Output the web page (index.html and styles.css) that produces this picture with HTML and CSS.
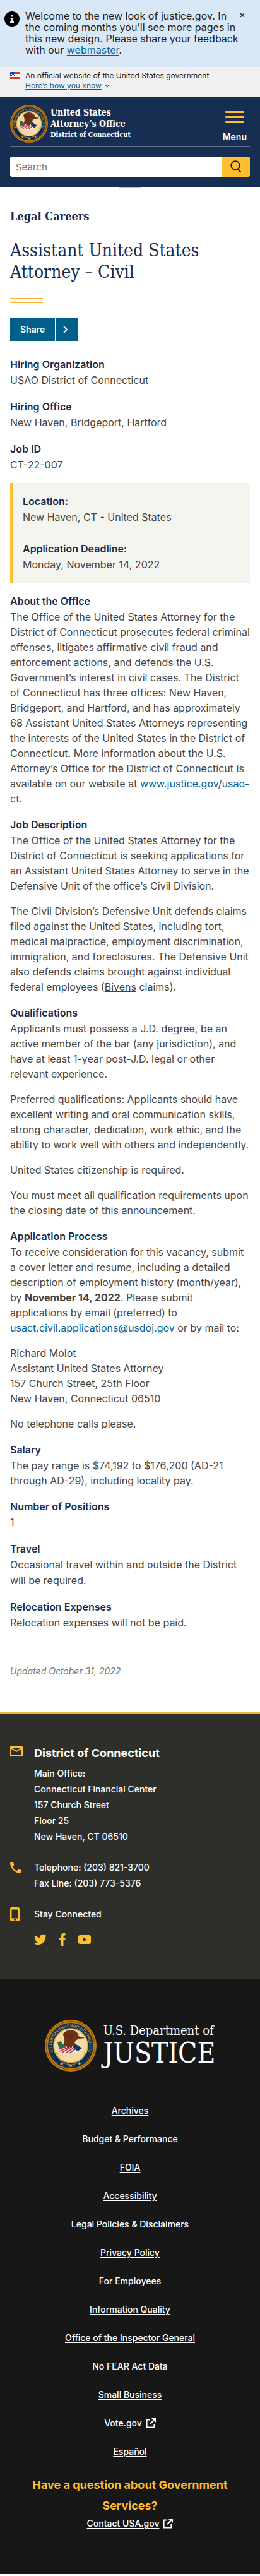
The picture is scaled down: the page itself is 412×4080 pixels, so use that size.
FILE: index.html
```html
<!DOCTYPE html>
<html lang="en">
<head>
<meta charset="utf-8">
<meta name="viewport" content="width=device-width, initial-scale=1">
<title>Assistant United States Attorney – Civil</title>
<link rel="stylesheet" href="styles.css">
</head>
<body>
<svg class="defs" aria-hidden="true">
  <symbol id="seal" viewBox="0 0 82 82">
    <circle cx="41" cy="41" r="41" fill="#c47a08"/>
    <circle cx="41" cy="41" r="38.500" fill="none" stroke="#6b4410" stroke-width="1"/>
    <circle cx="41" cy="41" r="36" fill="#14324c"/>
    <circle cx="41" cy="41" r="31.500" fill="none" stroke="#a98c50" stroke-width="4.500" stroke-dasharray="1.300 1.500 0.800 1.200" pathLength="190"/>
    <path d="M9 52a34 34 0 0 0 64 0l-5-2a29 29 0 0 1-54 0z" fill="#0c2950"/>
    <circle cx="41" cy="41" r="27" fill="#f3d9a2" stroke="#d9a63c" stroke-width="1.500"/>
    <path d="M19 49a22 22 0 0 0 44 0" fill="none" stroke="#b99c6c" stroke-width="2" stroke-dasharray="1 1"/>
    <path d="M20 36l5-2 4 5 5-1-3 8-8 1z" fill="#2e6b4c"/>
    <path d="M22 47l12-5 14 1 10 3-9 6-14 3-11-4z" fill="#f6efe9"/>
    <path d="M22 47l11-4M23 50l14-6M27 52l14-8M33 53l12-8M39 53l10-7" stroke="#b8283b" stroke-width="1.600"/>
    <path d="M46 36l5 4 8 5-7 5-7-6z" fill="#18356b"/>
    <path d="M29 22c5-6 12-7 19-4l6 5 9 6-8 1-5 2-3 4 1 4-4 1-2 4-3-2-3 3-2-5-4-1 1-6c1-4-2-8-2-12z" fill="#6d3218"/>
    <path d="M31 22c6 0 9 2 14 6M31 25c5 1 7 3 11 6" stroke="#3f1b0d" fill="none"/>
    <path d="M52 23l6 1 3 4-6-1z" fill="#eee0c0"/>
    <path d="M27 67l1 2 2 0-2 1 1 2-2-1-2 1 1-2-2-1 2 0zM41 70l1 2 2 0-2 1 1 2-2-1-2 1 1-2-2-1 2 0zM55 67l1 2 2 0-2 1 1 2-2-1-2 1 1-2-2-1 2 0z" fill="#e2b13c"/>
  </symbol>
  <symbol id="external" viewBox="0 0 16 16">
    <path d="M7 2.500H1.500v12h12V9M9.500 1H15v5.500M14.500 1.500L7 9" fill="none" stroke="currentColor" stroke-width="2.200"/>
  </symbol>
</svg>

<section class="alert" aria-label="Site notice">
  <svg class="alert-icon" viewBox="0 0 24 24" aria-hidden="true"><circle cx="12" cy="12" r="12" fill="#000"/><path d="M10.500 5.500h3v3h-3zM9.500 10h4v6h1.500v2h-6v-2h1.500v-4h-1z" fill="#d9e8f6"/></svg>
  <p class="alert-text">Welcome to the new look of justice.gov. In the coming months you’ll see more pages in this new design. Please share your feedback with our <a href="#">webmaster</a>.</p>
  <button class="alert-close" type="button" aria-label="Close"><svg viewBox="0 0 8 8" aria-hidden="true"><path d="M1.200 1.200l5.600 5.600M6.800 1.200L1.200 6.800" stroke="#1b1b1b" stroke-width="1.500"/></svg></button>
</section>

<section class="gov" aria-label="Official government website">
  <svg class="flag" viewBox="0 0 16 11" aria-hidden="true"><path fill="#fff" d="M0 0h16v11H0z"/><path d="M0 .5h16M0 2.500h16M0 4.500h16M0 6.500h16M0 8.500h16M0 10.500h16" stroke="#db3e1f"/><path fill="#2a3bb8" d="M0 0h8v7H0z"/><path d="M1 1.500h7M2 3.500h6M1 5.500h7" stroke="#fff" stroke-dasharray="1 1"/></svg>
  <div>
    <p>An official website of the United States government</p>
    <button class="gov-toggle" type="button"><span>Here’s how you know</span><svg viewBox="0 0 8 6" aria-hidden="true"><path d="M.7 1.200L4 4.500l3.300-3.300" fill="none" stroke="#005ea2" stroke-width="1.300"/></svg></button>
  </div>
</section>

<header class="header">
  <div class="brand-row">
    <a class="brand" href="#">
      <svg class="brand-seal" aria-hidden="true"><use href="#seal"/></svg>
      <span class="brand-text">United States<br>Attorney’s Office<small>District of Connecticut</small></span>
    </a>
    <button class="menu" type="button"><span class="bars"><i></i><i></i><i></i></span>Menu</button>
  </div>
  <form class="search">
    <input type="search" placeholder="Search" aria-label="Search">
    <button type="submit" aria-label="Search"><svg viewBox="0 0 18 20" aria-hidden="true"><circle cx="8" cy="8" r="6.800" fill="none" stroke="#1b1b1b" stroke-width="1.800"/><path d="M12 13.500l4.500 5.500" stroke="#1b1b1b" stroke-width="2.200"/></svg></button>
  </form>
</header>
<div class="notch"></div>

<main class="main">
  <p class="kicker">Legal Careers</p>
  <h1>Assistant United States Attorney – Civil</h1>
  <div class="rule"></div>
  <button class="share" type="button"><span>Share</span><svg viewBox="0 0 36 36" aria-hidden="true"><path d="M13 13l5 5-5 5" fill="none" stroke="#fff" stroke-width="1.800"/></svg></button>

  <section class="field"><h2>Hiring Organization</h2><p>USAO District of Connecticut</p></section>
  <section class="field"><h2>Hiring Office</h2><p>New Haven, Bridgeport, Hartford</p></section>
  <section class="field"><h2>Job ID</h2><p>CT-22-007</p></section>

  <aside class="box">
    <section><h2>Location:</h2><p>New Haven, CT - United States</p></section>
    <section><h2>Application Deadline:</h2><p>Monday, November 14, 2022</p></section>
  </aside>

  <section class="copy">
    <h2>About the Office</h2>
    <p>The Office of the United States Attorney for the District of Connecticut prosecutes federal criminal offenses, litigates affirmative civil fraud and enforcement actions, and defends the U.S. Government’s interest in civil cases. The District of Connecticut has three offices: New Haven, Bridgeport, and Hartford, and has approximately 68 Assistant United States Attorneys representing the interests of the United States in the District of Connecticut. More information about the U.S. Attorney’s Office for the District of Connecticut is available on our website at <a href="#">www.justice.gov/usao-ct</a>.</p>
  </section>
  <section class="copy">
    <h2>Job Description</h2>
    <p>The Office of the United States Attorney for the District of Connecticut is seeking applications for an Assistant United States Attorney to serve in the Defensive Unit of the office’s Civil Division.</p>
    <p>The Civil Division’s Defensive Unit defends claims filed against the United States, including tort, medical malpractice, employment discrimination, immigration, and foreclosures. The Defensive Unit also defends claims brought against individual federal employees (<u>Bivens</u> claims).</p>
  </section>
  <section class="copy">
    <h2>Qualifications</h2>
    <p>Applicants must possess a J.D. degree, be an active member of the bar (any jurisdiction), and have at least 1-year post-J.D. legal or other relevant experience.</p>
    <p>Preferred qualifications: Applicants should have excellent writing and oral communication skills, strong character, dedication, work ethic, and the ability to work well with others and independently.</p>
    <p>United States citizenship is required.</p>
    <p>You must meet all qualification requirements upon the closing date of this announcement.</p>
  </section>
  <section class="copy">
    <h2>Application Process</h2>
    <p>To receive consideration for this vacancy, submit a cover letter and resume, including a detailed description of employment history (month/year), by <strong>November 14, 2022</strong>. Please submit applications by email (preferred) to <a href="#">usact.civil.applications@usdoj.gov</a> or by mail to:</p>
    <p>Richard Molot<br>Assistant United States Attorney<br>157 Church Street, 25th Floor<br>New Haven, Connecticut 06510</p>
    <p>No telephone calls please.</p>
  </section>
  <section class="copy">
    <h2>Salary</h2>
    <p>The pay range is $74,192 to $176,200 (AD-21 through AD-29), including locality pay.</p>
  </section>
  <section class="field"><h2>Number of Positions</h2><p>1</p></section>
  <section class="field"><h2>Travel</h2><p>Occasional travel within and outside the District will be required.</p></section>
  <section class="field"><h2>Relocation Expenses</h2><p>Relocation expenses will not be paid.</p></section>
  <p class="updated">Updated October 31, 2022</p>
</main>

<footer>
  <div class="office">
    <svg class="office-icon" viewBox="0 0 24 24" aria-hidden="true"><path d="M3 5h18v14H3zM3 6l9 6 9-6" transform="translate(-2 0)" fill="none" stroke="currentColor" stroke-width="2" stroke-linejoin="round"/></svg>
    <div>
      <h2>District of Connecticut</h2>
      <p>Main Office:<br>Connecticut Financial Center<br>157 Church Street<br>Floor 25<br>New Haven, CT 06510</p>
    </div>
    <svg class="office-icon" viewBox="0 0 24 24" aria-hidden="true"><path d="M4.600 8.800a15 15 0 0 0 6.600 6.600l2.200-2.200c.3-.3.700-.4 1-.2 1.100.4 2.300.6 3.600.6.600 0 1 .4 1 1V18c0 .6-.4 1-1 1C8.600 19 1 11.400 1 2c0-.6.400-1 1-1h3.500c.6 0 1 .4 1 1 0 1.200.2 2.400.6 3.600.1.300 0 .7-.2 1z" transform="translate(-1 3)" fill="currentColor"/></svg>
    <p>Telephone: (203) 821-3700<br>Fax Line: (203) 773-5376</p>
    <svg class="office-icon" viewBox="0 0 24 24" aria-hidden="true"><path fill-rule="evenodd" d="M2.500 0h10Q15 0 15 2.500v17q0 2.500-2.500 2.500h-10Q0 22 0 19.500v-17Q0 0 2.500 0zM2.500 3.500v14h10v-14zM6 19v1.500h3V19z" transform="translate(0 2)" fill="currentColor"/></svg>
    <div>
      <p>Stay Connected</p>
      <div class="social">
        <a href="#" aria-label="Twitter"><svg viewBox="0 0 24 24"><path fill="currentColor" d="M23.950 4.570a10 10 0 0 1-2.820.770 4.960 4.960 0 0 0 2.160-2.720c-.950.550-2 .950-3.130 1.180a4.920 4.920 0 0 0-8.390 4.480A13.900 13.900 0 0 1 1.640 3.160a4.820 4.820 0 0 0-.670 2.480c0 1.710.870 3.210 2.190 4.100a4.900 4.900 0 0 1-2.230-.620v.060a4.920 4.920 0 0 0 3.950 4.830 5 5 0 0 1-2.210.080 4.940 4.940 0 0 0 4.600 3.420A9.870 9.870 0 0 1 0 19.540a14 14 0 0 0 7.550 2.210c9.050 0 14-7.500 14-13.980 0-.210 0-.420-.020-.630a10 10 0 0 0 2.420-2.570z"/></svg></a>
        <a class="fb" href="#" aria-label="Facebook"><svg viewBox="0 0 10 20"><path fill="currentColor" d="M9.500 0v3.400H7.600C6.600 3.400 6.500 4 6.500 4.800V7h3.300l-.5 3.500H6.500V20h-4v-9.500H0V7h2.500V4.200C2.500 1.500 4.200 0 6.800 0z"/></svg></a>
        <a href="#" aria-label="YouTube"><svg viewBox="0 0 20 20"><path fill="currentColor" fill-rule="evenodd" d="M3 3h14q3 0 3 3v8q0 3-3 3H3q-3 0-3-3V6q0-3 3-3zM7.500 6.500v7l6-3.500z"/></svg></a>
      </div>
    </div>
  </div>

  <div class="doj">
    <a class="doj-logo" href="#">
      <svg class="doj-seal" aria-hidden="true"><use href="#seal"/></svg>
      <span class="doj-text">U.S. Department of<b>JUSTICE</b></span>
    </a>
    <ul class="links">
      <li><a href="#">Archives</a></li>
      <li><a href="#">Budget &amp; Performance</a></li>
      <li><a href="#">FOIA</a></li>
      <li><a href="#">Accessibility</a></li>
      <li><a href="#">Legal Policies &amp; Disclaimers</a></li>
      <li><a href="#">Privacy Policy</a></li>
      <li><a href="#">For Employees</a></li>
      <li><a href="#">Information Quality</a></li>
      <li><a href="#">Office of the Inspector General</a></li>
      <li><a href="#">No FEAR Act Data</a></li>
      <li><a href="#">Small Business</a></li>
      <li><a href="#">Vote.gov</a><svg class="ext" aria-hidden="true"><use href="#external"/></svg></li>
      <li><a href="#">Español</a></li>
    </ul>
    <h2>Have a question about Government Services?</h2>
    <p class="contact"><a href="#">Contact USA.gov</a><svg class="ext" aria-hidden="true"><use href="#external"/></svg></p>
  </div>
</footer>
</body>
</html>
```
FILE: styles.css
```css
* { box-sizing: border-box; }
body { margin: 0; background: #fff; color: #454545; font: 16px/24px Inter, "Liberation Sans", sans-serif; }
p, h1, h2, ul { margin: 0; padding: 0; }
a { color: #005ea2; text-underline-offset: 2px; }
button { font: inherit; border: 0; padding: 0; background: none; cursor: pointer; }
svg { display: block; flex: none; }
.defs { position: absolute; width: 0; height: 0; }

.alert { display: flex; align-items: flex-start; padding: 16px 24px 16px 7px; min-height: 106px; background: #d9e8f6; color: #1b1b1b; }
.alert-icon { width: 24px; height: 24px; margin: 2px 9px 0 0; }
.alert-text { flex: 1; font-size: 16px; line-height: 18px; }
.alert-close { padding: 4px 0; }
.alert-close svg { width: 8px; height: 8px; }

.gov { display: flex; gap: 8px; padding: 6px 16px 10px; background: #f0f0f0; color: #1b1b1b; font-size: 12px; line-height: 16px; }
.flag { width: 16px; height: 11px; margin-top: 2px; }
.gov-toggle { display: flex; align-items: center; gap: 5px; color: #005ea2; }
.gov-toggle span { text-decoration: underline; }
.gov-toggle svg { width: 8px; height: 6px; }

.header { padding: 12px 16px 16px; background: #162e51; color: #fff; }
.brand-row { display: flex; justify-content: space-between; align-items: flex-start; padding-bottom: 3px; border-bottom: 1px solid #5c6f8c; }
.brand { display: flex; align-items: center; gap: 4px; color: #fff; text-decoration: none; }
.brand-seal { width: 60px; height: 60px; }
.brand-text { font: bold 14px/18px "DejaVu Serif Condensed", "DejaVu Serif", serif; }
.brand-text small { display: block; font-size: 11px; line-height: 18px; font-weight: bold; }
.menu { display: flex; flex-direction: column; align-items: center; gap: 10px; padding: 10px 5px 0 0; color: #fff; font-weight: 600; font-size: 14px; line-height: 24px; }
.bars { display: grid; gap: 5px; }
.bars i { width: 30px; height: 3px; border-radius: 1px; background: #ffbe2e; }
.search { display: flex; margin-top: 15px; border-radius: 4px; overflow: hidden; background: #fff; }
.search input { flex: 1; min-width: 0; height: 32px; border: 0; padding: 0 9px; background: #fff; font: 15px/20px Inter, sans-serif; }
.search input::placeholder { color: #757575; }
.search button { display: grid; place-items: center; width: 45px; background: #ffbe2e; }
.search button svg { width: 18px; height: 20px; }
.notch { width: 36px; height: 2px; margin: 0 auto; background: #e9c23a; }

.main { padding: 32px 16px 52px; }
.kicker { color: #162e51; font: bold 18px/26px "DejaVu Serif Condensed", "DejaVu Serif", serif; }
h1 { margin-top: 24px; color: #162e51; font: 28px/34px "DejaVu Serif Condensed", "DejaVu Serif", serif; }
.rule { width: 52px; height: 8px; margin: 24px 0; border: solid #ffb43c; border-width: 2px 0; }
.share { display: flex; align-items: center; height: 36px; background: #00608a; color: #fff; font-size: 14px; font-weight: 600; }
.share span { padding: 0 16px; }
.share svg { width: 37px; height: 36px; border-left: 1px solid #fff; }
h2 { font-size: 16px; line-height: 26px; font-weight: 600; color: #162e51; }
.share + .field { margin-top: 24px; }
.field { margin-bottom: 16px; }
.field p { line-height: 25px; }
.box { display: grid; gap: 24px; margin-bottom: 16px; padding: 16px; border-left: 4px solid #ffbe2e; background: #f5f5f0; }
.box p { line-height: 25px; }
.copy { margin-bottom: 16px; }
.copy p + p { margin-top: 16px; }
.updated { margin-top: 52px; font-size: 14px; font-style: italic; color: #71767a; }

.office { display: grid; grid-template-columns: 22px 1fr; gap: 24px 16px; padding: 48px 16px 52px; border-top: 3px solid #e5b53a; background: #2e2f2a; color: #fff; font-size: 14px; line-height: 25px; font-weight: 500; }
.office-icon { width: 24px; height: 24px; color: #ffbe2e; }
.office h2 { margin-bottom: 4px; color: #fff; font-size: 18px; font-weight: 700; line-height: 30px; }
.social { display: flex; align-items: center; gap: 20px; padding-top: 18px; }
.social a { color: #ffbe2e; }
.social svg { width: 20px; height: 20px; }
.social .fb svg { width: 10px; }

.doj { padding: 64px 16px 68px; border-top: 1px solid #555; background: #171717; color: #fff; font-size: 14px; line-height: 24px; font-weight: 500; text-align: center; }
.doj a { color: #fff; }
.doj-logo { display: flex; justify-content: center; align-items: center; gap: 11px; text-decoration: none; }
.doj-seal { width: 82px; height: 82px; }
.doj-text { text-align: left; font: 20px/24px "DejaVu Serif Condensed", "DejaVu Serif", serif; }
.doj-text b { display: block; font: 44px/48px "DejaVu Serif Condensed", "DejaVu Serif", serif; }
.links { display: grid; gap: 21px; margin-top: 50px; list-style: none; }
.links li, .contact { display: flex; justify-content: center; align-items: center; gap: 6px; }
.ext { width: 16px; height: 16px; }
.doj h2 { margin-top: 24px; color: #ffbe2e; font-size: 18px; line-height: 33px; font-weight: 700; }
```
